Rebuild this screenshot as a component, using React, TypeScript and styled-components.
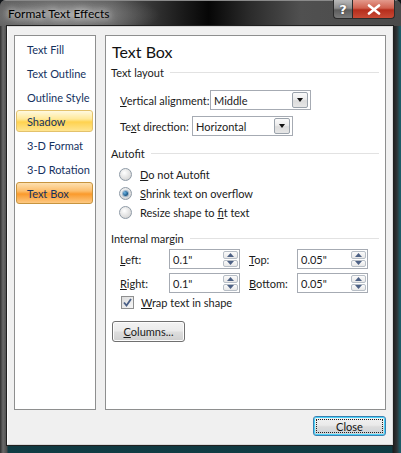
import styled, { createGlobalStyle } from 'styled-components';

const GlobalStyle = createGlobalStyle`
  html, body {
    margin: 0;
    padding: 0;
    background: #101418;
  }
  body {
    font-family: Lato, "Liberation Sans", sans-serif;
    font-size: 11px;
    color: #1b1b1b;
  }
`;

const navItems = [
  'Text Fill',
  'Text Outline',
  'Outline Style',
  'Shadow',
  '3-D Format',
  '3-D Rotation',
  'Text Box',
];

type NavState = 'none' | 'hover' | 'selected';

const navState = (label: string): NavState => {
  if (label === 'Shadow') return 'hover';
  if (label === 'Text Box') return 'selected';
  return 'none';
};

const App = () => {
  return (
    <>
      <GlobalStyle />
      <Window>
        <TitleBar>
          <Title>Format Text Effects</Title>
          <CaptionButtons>
            <HelpButton>?</HelpButton>
            <CloseCaption>
              <svg width="14" height="11" viewBox="0 0 14 11">
                <path
                  d="M2 1.5 L12 9.5 M12 1.5 L2 9.5"
                  stroke="#fff"
                  strokeWidth="2.6"
                  strokeLinecap="round"
                />
              </svg>
            </CloseCaption>
          </CaptionButtons>
        </TitleBar>
        <FrameBody>
          <Client>
            <Main>
              <Nav>
                {navItems.map((label) => (
                  <NavItem key={label} $state={navState(label)}>
                    {label}
                  </NavItem>
                ))}
              </Nav>
              <Panel>
                <Heading>Text Box</Heading>

                <SectionHeader $top={2}>Text layout</SectionHeader>
                <FieldRow $top={10}>
                  <Label $width={90}>
                    <u>V</u>ertical alignment:
                  </Label>
                  <Select $width={101}>
                    <SelectValue>Middle</SelectValue>
                    <DropButton>
                      <Caret />
                    </DropButton>
                  </Select>
                </FieldRow>
                <FieldRow $top={6}>
                  <Label $width={72}>
                    Te<u>x</u>t direction:
                  </Label>
                  <Select $width={101}>
                    <SelectValue>Horizontal</SelectValue>
                    <DropButton>
                      <Caret />
                    </DropButton>
                  </Select>
                </FieldRow>

                <SectionHeader $top={9}>Autofit</SectionHeader>
                <RadioList>
                  <RadioRow>
                    <Radio />
                    <span>
                      <u>D</u>o not Autofit
                    </span>
                  </RadioRow>
                  <RadioRow>
                    <Radio $checked />
                    <span>
                      <u>S</u>hrink text on overflow
                    </span>
                  </RadioRow>
                  <RadioRow>
                    <Radio />
                    <span>
                      Resize shape to <u>f</u>it text
                    </span>
                  </RadioRow>
                </RadioList>

                <SectionHeader $top={8}>Internal margin</SectionHeader>
                <MarginGrid>
                  <GridLabel>
                    <u>L</u>eft:
                  </GridLabel>
                  <SpinBox value={'0.1"'} />
                  <GridLabel $indent>
                    <u>T</u>op:
                  </GridLabel>
                  <SpinBox value={'0.05"'} />
                  <GridLabel>
                    <u>R</u>ight:
                  </GridLabel>
                  <SpinBox value={'0.1"'} />
                  <GridLabel $indent>
                    <u>B</u>ottom:
                  </GridLabel>
                  <SpinBox value={'0.05"'} />
                </MarginGrid>
                <CheckRow>
                  <CheckBox>
                    <svg width="9" height="9" viewBox="0 0 9 9">
                      <path
                        d="M1 4.5 L3.5 7.5 L8 1"
                        stroke="#4a5f86"
                        strokeWidth="1.8"
                        fill="none"
                      />
                    </svg>
                  </CheckBox>
                  <span>
                    <u>W</u>rap text in shape
                  </span>
                </CheckRow>
                <PushButton>
                  <u>C</u>olumns...
                </PushButton>
              </Panel>
            </Main>
            <Footer>
              <DefaultButton>
                <FocusRect>Close</FocusRect>
              </DefaultButton>
            </Footer>
          </Client>
        </FrameBody>
      </Window>
    </>
  );
};

const SpinBox = ({ value }: { value: string }) => (
  <SpinField>
    <SpinValue>{value}</SpinValue>
    <SpinButtons>
      <SpinHalf>
        <svg width="7" height="4" viewBox="0 0 7 4">
          <path d="M0 4 L3.5 0 L7 4 Z" fill="#4d6185" />
        </svg>
      </SpinHalf>
      <SpinHalf>
        <svg width="7" height="4" viewBox="0 0 7 4">
          <path d="M0 0 L3.5 4 L7 0 Z" fill="#4d6185" />
        </svg>
      </SpinHalf>
    </SpinButtons>
  </SpinField>
);

const Window = styled.div`
  width: 401px;
  height: 453px;
  display: flex;
  flex-direction: column;
  background:
    linear-gradient(to right, #2e2e2e 0px, #6a6a6a 3px, #4b4b4b 7px, transparent 8px),
    linear-gradient(to bottom, #3d3d3d 0%, #333 50%, #1c2628 90%, #0f3d45 100%);
  box-sizing: border-box;
  border-radius: 6px 6px 0 0;
  overflow: hidden;
`;

const TitleBar = styled.div`
  height: 26px;
  flex: none;
  display: flex;
  justify-content: space-between;
  align-items: flex-start;
  padding-left: 8px;
  background:
    radial-gradient(ellipse 90px 22px at 70px 14px, rgba(190, 190, 190, 0.55), transparent),
    linear-gradient(to right, #5e5e5e 0%, #565656 28%, #1c1c1c 45%, #060606 52%, #2a2a2a 62%, #505050 75%, #4a4a4a 100%);
  border-top: 1px solid #8a8a8a;
  box-sizing: border-box;
`;

const Title = styled.div`
  padding-top: 4px;
  line-height: 18px;
  font-size: 12px;
  color: #000;
  text-shadow: 0 0 6px rgba(255, 255, 255, 0.9), 0 0 10px rgba(255, 255, 255, 0.7);
`;

const CaptionButtons = styled.div`
  display: flex;
  margin-right: 6px;
  margin-top: -1px;
`;

const CaptionBase = styled.div`
  height: 19px;
  display: flex;
  align-items: center;
  justify-content: center;
  box-sizing: border-box;
  border: 1px solid #2b2b2b;
  border-top: none;
  color: #fff;
  font-family: "DejaVu Sans", sans-serif;
  font-weight: bold;
  font-size: 13px;
`;

const HelpButton = styled(CaptionBase)`
  width: 19px;
  border-radius: 0 0 0 4px;
  border-right: none;
  background: linear-gradient(to bottom, #b9b9b9 0%, #8d8d8d 45%, #5c5c5c 55%, #7a7a7a 100%);
  text-shadow: 0 0 2px #333;
`;

const CloseCaption = styled(CaptionBase)`
  width: 43px;
  border-radius: 0 0 4px 0;
  background: linear-gradient(to bottom, #e39a8c 0%, #d0614f 45%, #b52d1c 55%, #c84a35 100%);
`;

const FrameBody = styled.div`
  flex: 1;
  display: flex;
  padding: 0 8px 8px 7px;
  background: linear-gradient(to right, transparent 392px, #1c1c1c 393px, #2f3436 397px, #1d5a66 400px);
`;

const Client = styled.div`
  flex: 1;
  display: flex;
  flex-direction: column;
  background: #f0f0f0;
  border: 1px solid #d9d9d9;
  border-left-color: #fbfbfb;
  padding: 8px 6px 8px 6px;
  box-shadow: 0 0 0 1px #202020;
`;

const Main = styled.div`
  flex: 1;
  display: flex;
  gap: 9px;
`;

const Nav = styled.div`
  width: 82px;
  box-sizing: border-box;
  background: #fff;
  border: 1px solid #8e8f8f;
  padding: 2px 2px 0 1px;
  display: flex;
  flex-direction: column;
  gap: 2px;
`;

const NavItem = styled.div<{ $state: NavState }>`
  height: 22px;
  box-sizing: border-box;
  padding-left: 10px;
  display: flex;
  align-items: center;
  color: #15325f;
  white-space: nowrap;
  border-radius: 3px;
  border: 1px solid
    ${(p) => (p.$state === 'hover' ? '#e3c26c' : p.$state === 'selected' ? '#c7943f' : 'transparent')};
  background: ${(p) =>
    p.$state === 'hover'
      ? 'linear-gradient(to bottom, #fff9df 0%, #ffe99a 40%, #ffd24f 55%, #ffe591 100%)'
      : p.$state === 'selected'
        ? 'linear-gradient(to bottom, #fde0b0 0%, #fcbe6c 40%, #fa9a2c 55%, #fdc983 100%)'
        : 'transparent'};
`;

const Panel = styled.div`
  flex: 1;
  box-sizing: border-box;
  background: #fff;
  border: 1px solid #8e8f8f;
  padding: 6px 6px 0 6px;
  display: flex;
  flex-direction: column;
`;

const Heading = styled.div`
  font-size: 16px;
  line-height: 20px;
  height: 20px;
  color: #111;
`;

const SectionHeader = styled.div<{ $top: number }>`
  height: 16px;
  margin-top: ${(p) => p.$top}px;
  margin-left: -1px;
  display: flex;
  align-items: center;
  gap: 6px;
  color: #1b1b1b;
  white-space: nowrap;
  &::after {
    content: '';
    flex: 1;
    height: 1px;
    background: #e2e2e2;
  }
`;

const FieldRow = styled.div<{ $top: number }>`
  height: 20px;
  margin-top: ${(p) => p.$top}px;
  padding-left: 8px;
  display: flex;
  align-items: center;
`;

const Label = styled.div<{ $width: number }>`
  width: ${(p) => p.$width}px;
  white-space: nowrap;
`;

const Select = styled.div<{ $width: number }>`
  width: ${(p) => p.$width}px;
  height: 20px;
  box-sizing: border-box;
  border: 1px solid #a6abb3;
  background: #fff;
  display: flex;
  align-items: center;
  padding: 1px;
`;

const SelectValue = styled.div`
  flex: 1;
  padding-left: 2px;
`;

const DropButton = styled.div`
  width: 16px;
  height: 16px;
  box-sizing: border-box;
  border: 1px solid #9aa2ab;
  border-radius: 2px;
  background: linear-gradient(to bottom, #fafafa 0%, #ececec 45%, #dcdcdc 55%, #e6e6e6 100%);
  display: flex;
  align-items: center;
  justify-content: center;
  margin-right: 1px;
`;

const Caret = styled.div`
  width: 0;
  height: 0;
  border-left: 3.5px solid transparent;
  border-right: 3.5px solid transparent;
  border-top: 4px solid #111;
`;

const RadioList = styled.div`
  margin-top: 4px;
  display: flex;
  flex-direction: column;
`;

const RadioRow = styled.div`
  height: 19px;
  padding-left: 7px;
  display: flex;
  align-items: center;
  gap: 8px;
`;

const Radio = styled.div<{ $checked?: boolean }>`
  width: 13px;
  height: 13px;
  box-sizing: border-box;
  border-radius: 50%;
  border: 1px solid #8e9aa6;
  background: radial-gradient(circle at 40% 35%, #ffffff 0%, #e4e4e4 50%, #c9c9c9 100%);
  display: flex;
  align-items: center;
  justify-content: center;
  &::after {
    content: '';
    display: ${(p) => (p.$checked ? 'block' : 'none')};
    width: 5px;
    height: 5px;
    border-radius: 50%;
    background: radial-gradient(circle at 35% 35%, #6fb6e6 0%, #1f5f8f 60%, #0c2f52 100%);
    box-shadow: 0 0 1px 1px rgba(35, 96, 150, 0.45);
  }
`;

const MarginGrid = styled.div`
  margin-top: 3px;
  padding-left: 8px;
  display: grid;
  grid-template-columns: 49px 71px 57px 71px;
  grid-auto-rows: 20px;
  row-gap: 4px;
  align-items: center;
`;

const GridLabel = styled.div<{ $indent?: boolean }>`
  padding-left: ${(p) => (p.$indent ? 9 : 0)}px;
  white-space: nowrap;
`;

const SpinField = styled.div`
  height: 20px;
  box-sizing: border-box;
  border: 1px solid #a6abb3;
  background: #fff;
  display: flex;
  padding: 1px;
`;

const SpinValue = styled.div`
  flex: 1;
  padding-left: 2px;
  display: flex;
  align-items: center;
`;

const SpinButtons = styled.div`
  width: 15px;
  display: flex;
  flex-direction: column;
  gap: 1px;
`;

const SpinHalf = styled.div`
  flex: 1;
  box-sizing: border-box;
  border: 1px solid #b7bec6;
  border-radius: 2px;
  background: linear-gradient(to bottom, #fbfbfb 0%, #e8e8e8 100%);
  display: flex;
  align-items: center;
  justify-content: center;
`;

const CheckRow = styled.div`
  height: 16px;
  margin-top: 1px;
  padding-left: 9px;
  display: flex;
  align-items: center;
  gap: 7px;
`;

const CheckBox = styled.div`
  width: 13px;
  height: 13px;
  box-sizing: border-box;
  border: 1px solid #8e8f8f;
  background: linear-gradient(135deg, #dcdcdc 0%, #f6f6f6 100%);
  display: flex;
  align-items: center;
  justify-content: center;
`;

const PushButton = styled.div`
  margin-top: 11px;
  width: 73px;
  height: 21px;
  box-sizing: border-box;
  border: 1px solid #707070;
  border-radius: 3px;
  background: linear-gradient(to bottom, #f3f3f3 0%, #ebebeb 45%, #dddddd 55%, #cfcfcf 100%);
  box-shadow: inset 0 0 0 1px #fcfcfc;
  display: flex;
  align-items: center;
  justify-content: center;
`;

const Footer = styled.div`
  height: 26px;
  flex: none;
  padding-top: 6px;
  box-sizing: border-box;
  display: flex;
  justify-content: flex-end;
`;

const DefaultButton = styled.div`
  width: 73px;
  height: 20px;
  box-sizing: border-box;
  border: 1px solid #3c7fb1;
  border-radius: 3px;
  background: linear-gradient(to bottom, #f2f2f2 0%, #eaeaea 45%, #dcdcdc 55%, #cdd3d8 100%);
  box-shadow: inset 0 0 0 1px #48d3f9;
  padding: 2px;
  display: flex;
`;

const FocusRect = styled.div`
  flex: 1;
  border: 1px dotted #222;
  display: flex;
  align-items: center;
  justify-content: center;
  color: #111;
`;

export default App;
